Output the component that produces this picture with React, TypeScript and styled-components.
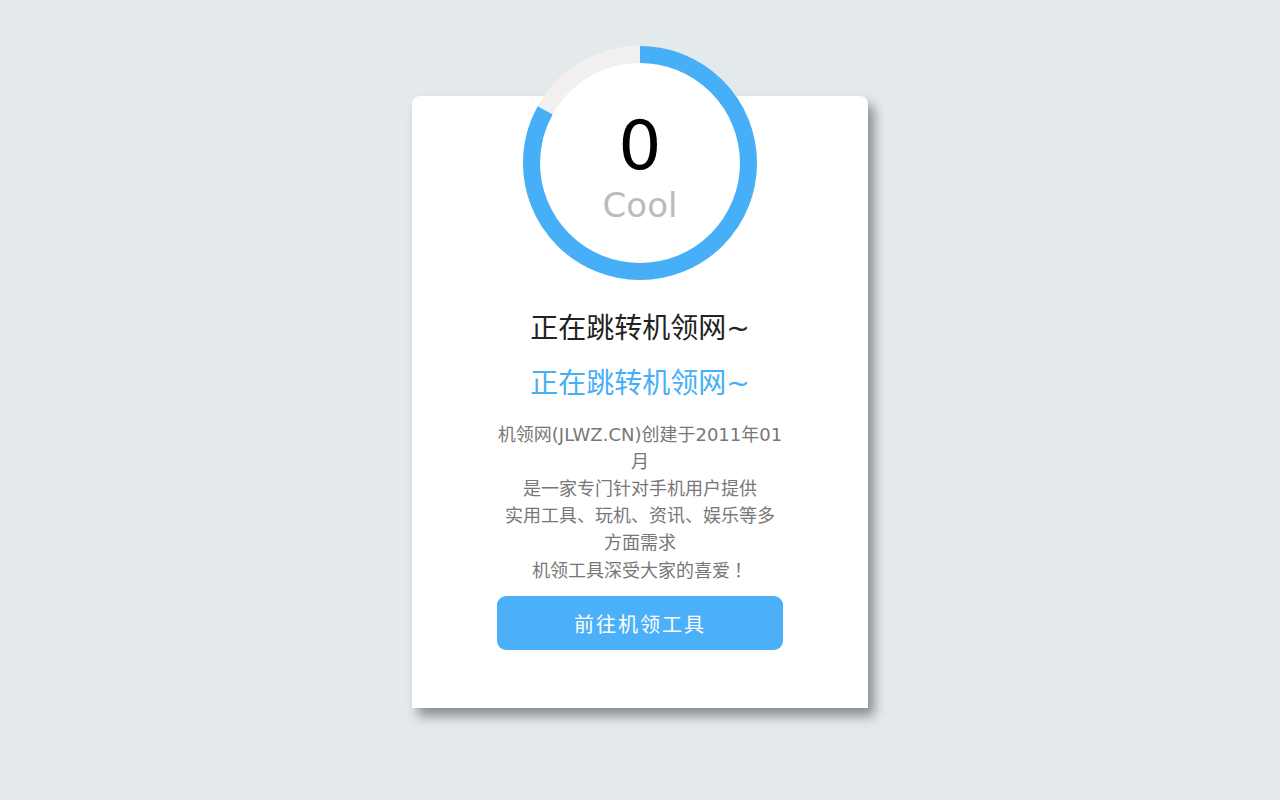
import React from "react";
import styled, { createGlobalStyle } from "styled-components";

const GlobalStyle = createGlobalStyle`
  html, body {
    margin: 0;
    padding: 0;
    background: #e4e9eb;
  }
  body {
    font-family: "DejaVu Sans", "Noto Sans CJK SC", sans-serif;
  }
`;

const progress = 0.83;
const size = 234;
const stroke = 17;
const radius = (size - stroke) / 2;
const circumference = 2 * Math.PI * radius;

const App = () => {
  return (
    <Page>
      <GlobalStyle />
      <Card>
        <Ring>
          <svg width={size} height={size} viewBox={`0 0 ${size} ${size}`}>
            <circle cx={size / 2} cy={size / 2} r={size / 2} fill="#fff" />
            <circle
              cx={size / 2}
              cy={size / 2}
              r={radius}
              fill="none"
              stroke="#f1f0ef"
              strokeWidth={stroke}
            />
            <circle
              cx={size / 2}
              cy={size / 2}
              r={radius}
              fill="none"
              stroke="#46aff8"
              strokeWidth={stroke}
              strokeDasharray={`${circumference * progress} ${circumference}`}
              transform={`rotate(-90 ${size / 2} ${size / 2})`}
            />
          </svg>
          <Count>0</Count>
          <Mood>Cool</Mood>
        </Ring>
        <Title>正在跳转机领网~</Title>
        <Title $accent>正在跳转机领网~</Title>
        <Intro>
          机领网(JLWZ.CN)创建于2011年01月
          <br />
          是一家专门针对手机用户提供
          <br />
          实用工具、玩机、资讯、娱乐等多方面需求
          <br />
          机领工具深受大家的喜爱<Mark>！</Mark>
        </Intro>
        <GoButton>前往机领工具</GoButton>
      </Card>
    </Page>
  );
};

const Page = styled.div`
  min-height: 800px;
  padding-top: 96px;
  box-sizing: border-box;
`;

const Card = styled.div`
  width: 456px;
  margin: 0 auto;
  background: #fff;
  border-radius: 8px 8px 0 0;
  box-shadow: 6px 8px 12px rgba(0, 0, 0, 0.4);
  display: flex;
  flex-direction: column;
  align-items: center;
  padding-bottom: 58px;
`;

const Ring = styled.div`
  position: relative;
  width: 234px;
  height: 234px;
  margin-top: -50px;
  display: flex;
  flex-direction: column;
  align-items: center;

  svg {
    position: absolute;
    inset: 0;
  }
`;

const Count = styled.div`
  position: relative;
  margin-top: 66px;
  font-size: 68px;
  line-height: 1;
  color: #000;
`;

const Mood = styled.div`
  position: relative;
  margin-top: 8px;
  font-size: 34px;
  line-height: 1;
  color: #bbb;
`;

const Title = styled.h2<{ $accent?: boolean }>`
  margin: ${(p) => (p.$accent ? "15px 0 0" : "29px 0 0")};
  font-size: 28px;
  font-weight: normal;
  line-height: 40px;
  color: ${(p) => (p.$accent ? "#46aff8" : "#222")};
`;

const Intro = styled.p`
  margin: 17px 0 0;
  width: 286px;
  text-align: center;
  font-size: 18px;
  line-height: 27px;
  color: #777;
`;

const Mark = styled.span`
  display: inline-block;
  width: 1em;
  padding-left: 4px;
  box-sizing: border-box;
  font-family: "Noto Sans CJK SC", sans-serif;
`;

const GoButton = styled.button`
  margin-top: 12px;
  width: 286px;
  height: 54px;
  border: none;
  border-radius: 9px;
  background: #4bb0f7;
  color: #fff;
  font-family: inherit;
  font-size: 20px;
  letter-spacing: 2px;
  cursor: pointer;
`;

export default App;
